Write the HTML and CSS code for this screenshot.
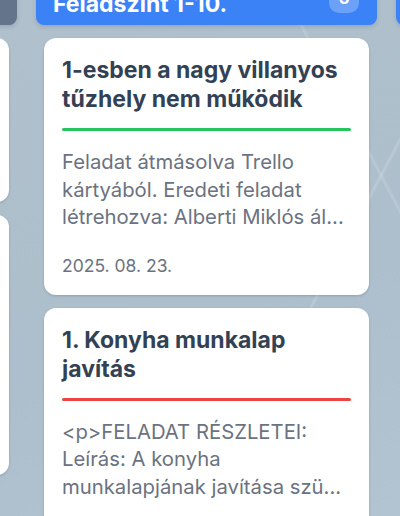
FILE: index.html
```html
<!DOCTYPE html>
<html lang="hu">
<head>
<meta charset="utf-8">
<title>Tábla</title>
<link rel="stylesheet" href="styles.css">
</head>
<body>
<main class="board">
  <section class="column">
    <header class="col-head col-head--slate">
      <h2 class="col-title">Elvégzendő</h2>
      <span class="col-count">4</span>
    </header>
    <div class="cards">
      <article class="card card--short"></article>
      <article class="card card--tall"></article>
    </div>
  </section>

  <section class="column">
    <header class="col-head col-head--blue">
      <h2 class="col-title">Feladszint 1-10.</h2>
      <span class="col-count">6</span>
    </header>
    <div class="cards">
      <article class="card">
        <h3 class="card-title">1-esben a nagy villanyos tűzhely nem működik</h3>
        <div class="card-bar card-bar--green"></div>
        <p class="card-desc">Feladat átmásolva Trello kártyából. Eredeti feladat létrehozva: Alberti Miklós ál...</p>
        <p class="card-date">2025. 08. 23.</p>
      </article>
      <article class="card">
        <h3 class="card-title">1. Konyha munkalap javítás</h3>
        <div class="card-bar card-bar--red"></div>
        <p class="card-desc">&lt;p&gt;FELADAT RÉSZLETEI: Leírás: A konyha munkalapjának javítása szü...</p>
        <p class="card-date">2025. 08. 23.</p>
      </article>
    </div>
  </section>

  <section class="column">
    <header class="col-head col-head--blue">
      <h2 class="col-title">Folyamatban</h2>
      <span class="col-count">2</span>
    </header>
    <div class="cards"></div>
  </section>
</main>
</body>
</html>
```

FILE: styles.css
```css
* { box-sizing: border-box; }

html, body {
  margin: 0;
  height: 100%;
  overflow: hidden;
}

body {
  font-family: Inter, "Noto Sans", "Liberation Sans", sans-serif;
  background-color: #aebfcc;
  background-image:
    linear-gradient(118deg, transparent 0 70%, rgba(255,255,255,0.18) 70.3%, transparent 70.8%),
    linear-gradient(62deg, transparent 0 83%, rgba(255,255,255,0.16) 83.3%, transparent 83.8%),
    linear-gradient(160deg, #b0c0cc 0%, #adbfcc 60%, #b2c4d1 100%);
}

.board {
  display: flex;
  align-items: flex-start;
  gap: 19px;
  margin-top: -29px;
  margin-left: -324px;
}

.column {
  flex: 0 0 341px;
  display: flex;
  flex-direction: column;
  gap: 13px;
}

.col-head {
  display: flex;
  align-items: center;
  justify-content: space-between;
  padding: 12px 17px;
  border-radius: 8px;
  color: #ffffff;
  box-shadow: 0 2px 4px rgba(30, 41, 59, 0.15);
}

.col-head--blue { background: #3b82f6; }
.col-head--slate { background: #64748b; }

.col-title {
  margin: 6px 0 -6px;
  font-size: 23px;
  line-height: 30px;
  font-weight: 700;
}

.col-count {
  width: 30px;
  height: 30px;
  border-radius: 10px;
  background: rgba(255, 255, 255, 0.25);
  display: flex;
  align-items: center;
  justify-content: center;
  font-size: 17px;
  font-weight: 700;
  margin-right: 1px;
}

.cards {
  display: flex;
  flex-direction: column;
  gap: 13px;
  padding: 0 8px;
}

.card {
  background: #ffffff;
  border-radius: 12px;
  padding: 18px 18px 18px;
  box-shadow: 0 1px 3px rgba(30, 41, 59, 0.12), 0 1px 2px rgba(30, 41, 59, 0.08);
}

.card--short { height: 164px; }
.card--tall { height: 260px; }

.card-title {
  margin: 0;
  font-size: 23px;
  line-height: 29px;
  font-weight: 700;
  color: #334155;
}

.card-bar {
  height: 3px;
  border-radius: 2px;
  margin: 14px 0 17px;
}

.card-bar--green { background: #22c55e; }
.card-bar--red { background: #ef4444; }

.card-desc {
  margin: 0;
  font-size: 20.3px;
  line-height: 27.5px;
  color: #6b7280;
}

.card-date {
  margin: 24px 0 0;
  font-size: 17.5px;
  line-height: 22px;
  color: #6b7280;
}
```
